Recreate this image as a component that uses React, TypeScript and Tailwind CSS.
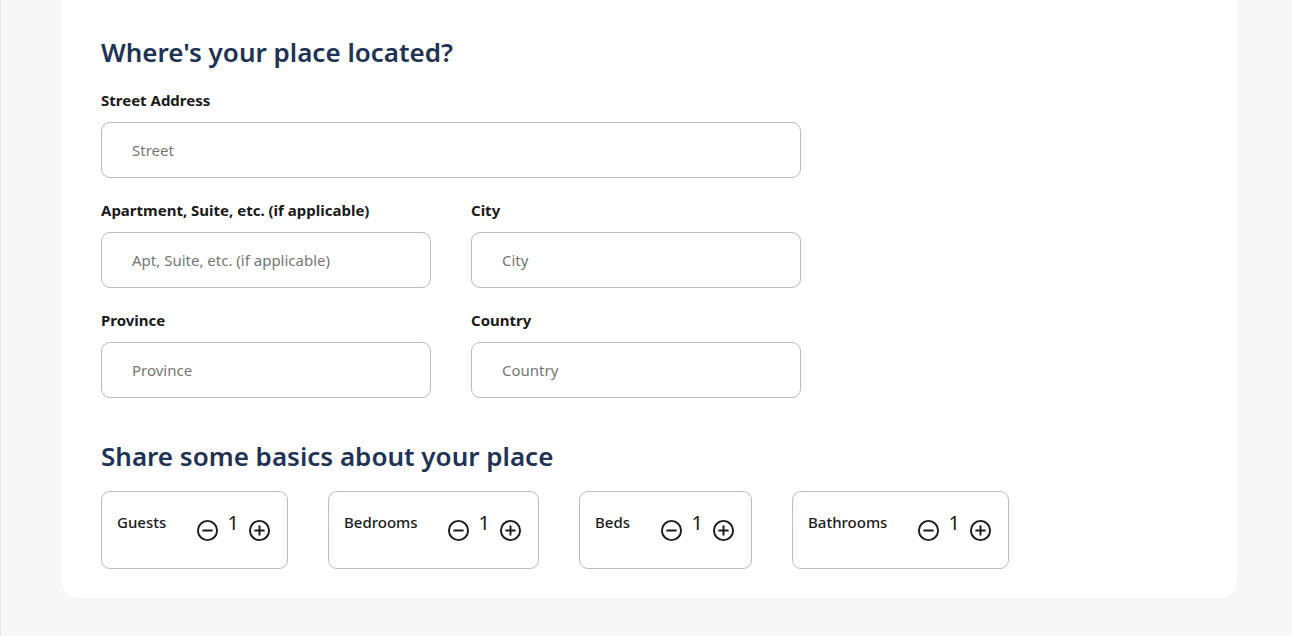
import React from "react";

function MinusIcon() {
  return (
    <svg width="23" height="23" viewBox="0 0 24 24" fill="none" stroke="#1a1a1a" strokeWidth="2" strokeLinecap="round">
      <circle cx="12" cy="12" r="10" />
      <line x1="7.5" y1="12" x2="16.5" y2="12" />
    </svg>
  );
}

function PlusIcon() {
  return (
    <svg width="23" height="23" viewBox="0 0 24 24" fill="none" stroke="#1a1a1a" strokeWidth="2" strokeLinecap="round">
      <circle cx="12" cy="12" r="10" />
      <line x1="7.5" y1="12" x2="16.5" y2="12" />
      <line x1="12" y1="7.5" x2="12" y2="16.5" />
    </svg>
  );
}

function Field({ label, placeholder, width }: { label: string; placeholder: string; width: string }) {
  return (
    <div className={`flex flex-col ${width}`}>
      <label className="text-[15px] font-bold text-[#1a1a1a] leading-5 mb-[12px]">{label}</label>
      <div className="h-[56px] rounded-[9px] border border-[#bdbdbd] flex items-center pl-[30px] text-[15px] text-[#767676]">
        {placeholder}
      </div>
    </div>
  );
}

function Counter({ label, width }: { label: string; width: string }) {
  return (
    <div className={`shrink-0 h-[78px] rounded-[9px] border border-[#bdbdbd] flex items-start justify-between pl-[15px] pr-[16px] pt-[20px] ${width}`}>
      <span className="text-[15px] text-[#1a1a1a] leading-5 font-medium">{label}</span>
      <div className="flex items-start gap-[9px]">
        <span className="mt-[7px]"><MinusIcon /></span>
        <span className="text-[20px] leading-5 text-[#1a1a1a] mt-[1px]">1</span>
        <span className="mt-[7px]"><PlusIcon /></span>
      </div>
    </div>
  );
}

export default function App() {
  return (
    <div
      className="w-[1292px] h-[636px] bg-[#f7f7f7] border-l border-[#e6e6e6] pl-[60px] pr-[55px]"
      style={{ fontFamily: '"Noto Sans", "Open Sans", sans-serif' }}
    >
      <div className="bg-white rounded-b-[18px] px-[40px] pt-[32px] pb-[29px]">
        <h2 className="text-[26px] font-semibold text-[#1f3354] leading-[40px]">Where's your place located?</h2>
        <div className="mt-[18px] flex flex-col gap-[22px]">
          <Field label="Street Address" placeholder="Street" width="w-[700px]" />
          <div className="flex gap-[40px]">
            <Field label="Apartment, Suite, etc. (if applicable)" placeholder="Apt, Suite, etc. (if applicable)" width="w-[330px]" />
            <Field label="City" placeholder="City" width="w-[330px]" />
          </div>
          <div className="flex gap-[40px]">
            <Field label="Province" placeholder="Province" width="w-[330px]" />
            <Field label="Country" placeholder="Country" width="w-[330px]" />
          </div>
        </div>
        <h2 className="mt-[38px] text-[26px] font-semibold text-[#1f3354] leading-[40px]">Share some basics about your place</h2>
        <div className="mt-[15px] flex gap-[40px]">
          <Counter label="Guests" width="w-[187px]" />
          <Counter label="Bedrooms" width="w-[211px]" />
          <Counter label="Beds" width="w-[173px]" />
          <Counter label="Bathrooms" width="w-[217px]" />
        </div>
      </div>
    </div>
  );
}
